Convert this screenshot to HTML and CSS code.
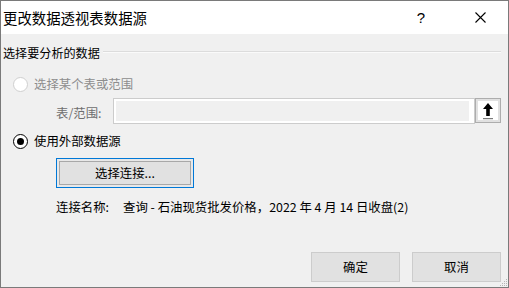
FILE: index.html
```html
<!DOCTYPE html>
<html lang="zh-CN">
<head>
<meta charset="utf-8">
<link rel="stylesheet" href="styles.css">
</head>
<body>
<div class="window">
  <div class="titlebar">
    <div class="title">更改数据透视表数据源</div>
    <div class="help">?</div>
    <div class="close">
      <svg width="11" height="11" viewBox="0 0 11 11"><path d="M0.5 0.5L10.5 10.5M10.5 0.5L0.5 10.5" stroke="#000" stroke-width="1.1" fill="none"/></svg>
    </div>
  </div>
  <div class="content">
    <div class="group-head">
      <span class="group-label">选择要分析的数据</span>
      <span class="group-line"></span>
    </div>
    <div class="radio-row disabled">
      <span class="radio"></span>
      <span>选择某个表或范围</span>
    </div>
    <div class="range-row">
      <span class="range-label">表/范围:</span>
      <div class="range-input"><div class="range-fill"></div></div>
      <div class="collapse-btn">
        <div class="collapse-inner">
          <svg width="14" height="18" viewBox="0 0 14 18"><path d="M7 1L2 7H5.2V14H8.8V7H12Z" fill="#000"/><rect x="2" y="16" width="10" height="1.2" fill="#7a7a7a"/></svg>
        </div>
      </div>
    </div>
    <div class="radio-row">
      <span class="radio checked"></span>
      <span>使用外部数据源</span>
    </div>
    <div class="conn-row">
      <button class="btn focused">选择连接...</button>
    </div>
    <div class="name-row">
      <span class="name-label">连接名称:</span>
      <span class="name-value">查询 - 石油现货批发价格，2022 年 4 月 14 日收盘(2)</span>
    </div>
    <div class="footer">
      <button class="btn dlg">确定</button>
      <button class="btn dlg">取消</button>
    </div>
    <svg class="grip" width="8" height="8" viewBox="0 0 8 8">
      <rect x="6" y="0" width="1" height="1" fill="#b5b5b5"/>
      <rect x="4" y="2" width="1" height="1" fill="#b5b5b5"/>
      <rect x="6" y="2" width="1" height="1" fill="#b5b5b5"/>
      <rect x="2" y="4" width="1" height="1" fill="#b5b5b5"/>
      <rect x="4" y="4" width="1" height="1" fill="#b5b5b5"/>
      <rect x="6" y="4" width="1" height="1" fill="#b5b5b5"/>
      <rect x="0" y="6" width="1" height="1" fill="#b5b5b5"/>
      <rect x="2" y="6" width="1" height="1" fill="#b5b5b5"/>
      <rect x="4" y="6" width="1" height="1" fill="#b5b5b5"/>
      <rect x="6" y="6" width="1" height="1" fill="#b5b5b5"/>
    </svg>
  </div>
</div>
</body>
</html>
```
FILE: styles.css
```css
* { box-sizing: border-box; }
html, body { margin: 0; padding: 0; }
body {
  width: 509px;
  height: 288px;
  font-family: "Noto Sans CJK SC", "Noto Sans", sans-serif;
  color: #000;
  overflow: hidden;
}
.window {
  width: 509px;
  height: 288px;
  border: 1px solid #7a7a7a;
  display: flex;
  flex-direction: column;
}
.titlebar {
  height: 33px;
  background: #fff;
  display: flex;
  align-items: center;
  padding-left: 2px;
}
.title {
  font-size: 14.4px;
  line-height: 18px;
  flex: 1;
}
.help {
  font-family: "Liberation Sans", sans-serif;
  font-size: 15px;
  line-height: 18px;
  width: 14px;
  text-align: center;
  margin-right: 47px;
}
.close {
  width: 11px;
  height: 11px;
  margin-right: 22px;
  display: flex;
}
.content {
  flex: 1;
  background: #f0f0f0;
  display: flex;
  flex-direction: column;
  padding: 11px 7px 5px 2px;
  font-size: 12.4px;
  position: relative;
}
.group-head {
  display: flex;
  align-items: center;
  height: 16px;
  line-height: 16px;
}
.group-label { font-size: 12.1px; }
.group-line {
  flex: 1;
  height: 0;
  border-top: 1px solid #dcdcdc;
  border-bottom: 1px solid #fafafa;
  margin-left: 3px;
  margin-top: -2px;
}
.radio-row {
  display: flex;
  align-items: center;
  height: 16px;
  line-height: 16px;
  margin-top: 15px;
  padding-left: 10px;
  gap: 6px;
}
.radio-row.disabled { color: #8d8d8d; }
.radio {
  width: 15px;
  height: 15px;
  border-radius: 50%;
  border: 1px solid #000;
  background: #fff;
  position: relative;
}
.disabled .radio { border-color: #cfcfcf; }
.radio.checked::after {
  content: "";
  position: absolute;
  left: 3px;
  top: 3px;
  width: 7px;
  height: 7px;
  border-radius: 50%;
  background: #000;
}
.radio-row:not(.disabled) { margin-top: 9px; }
.range-row {
  display: flex;
  align-items: center;
  margin-top: 6px;
  padding-left: 53px;
  height: 26px;
}
.range-label {
  color: #6e6e6e;
  width: 57px;
  line-height: 16px;
  margin-top: 3px;
}
.range-input {
  width: 362px;
  height: 26px;
  border: 1px solid #cccccc;
  background: #fff;
  padding: 2px 5px 2px 2px;
}
.range-fill {
  width: 100%;
  height: 100%;
  background: #f0f0f0;
}
.collapse-btn {
  width: 26px;
  height: 25px;
  border: 1px solid #adadad;
  background: #e1e1e1;
  padding: 2px;
  align-self: flex-start;
}
.collapse-inner {
  width: 100%;
  height: 100%;
  background: #fff;
  display: flex;
  align-items: center;
  justify-content: center;
}
.conn-row {
  margin-top: 9px;
  padding-left: 53px;
  display: flex;
}
.btn {
  font-family: inherit;
  font-size: 12.4px;
  color: #000;
  background: #e1e1e1;
  border: 1px solid #adadad;
  padding: 0;
  margin: 0;
  line-height: 16px;
}
.btn.focused {
  width: 138px;
  height: 30px;
  border-color: #0078d7;
  box-shadow: inset 0 0 0 2px #e8e8e8, inset 0 0 0 3px #a8a8a8;
}
.name-row {
  margin-top: 11px;
  padding-left: 53px;
  height: 16px;
  line-height: 16px;
  display: flex;
}
.name-label { width: 67px; }
.footer {
  margin-top: auto;
  display: flex;
  justify-content: flex-end;
  gap: 12px;
}
.btn.dlg {
  width: 89px;
  height: 30px;
  border-color: #cccccc;
}
.grip {
  position: absolute;
  right: 0;
  bottom: 0;
}
```
